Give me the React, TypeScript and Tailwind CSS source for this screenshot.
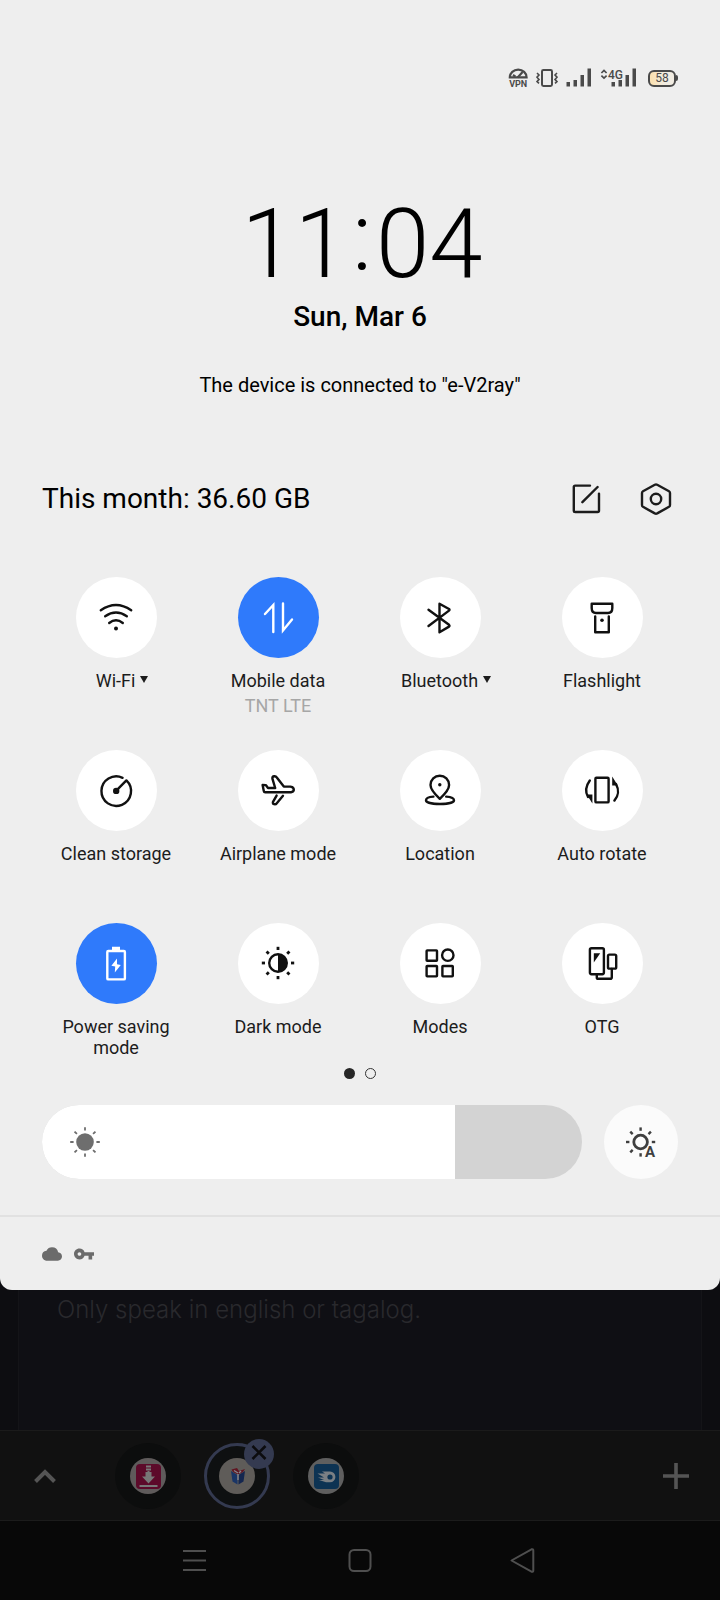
import { useState } from 'react';
import type { ReactNode } from 'react';

type IconProps = { children: ReactNode; className?: string };

const Icon = ({ children, className = 'size-10' }: IconProps) => (
  <svg
    viewBox="0 0 40 40"
    className={className}
    fill="none"
    stroke="currentColor"
    strokeWidth="2.4"
    strokeLinecap="round"
    strokeLinejoin="round"
    aria-hidden="true"
  >
    {children}
  </svg>
);

const rays = [0, 45, 90, 135, 180, 225, 270, 315];

const tiles = [
  {
    label: 'Wi-Fi',
    menu: true,
    icon: (
      <Icon>
        <path d="M4.8 12.3Q20 1.7 35.2 12.3M9.2 18.2Q20 10.8 30.8 18.2M13.2 25Q20 19.5 26.8 25" />
        <circle cx="20" cy="30.6" r="2" fill="currentColor" stroke="none" />
      </Icon>
    ),
  },
  {
    label: 'Mobile data',
    note: 'TNT LTE',
    on: true,
    icon: (
      <Icon>
        <path d="M7 16L15.3 7V34M25 5.5V32.5L34 21.5" strokeLinejoin="miter" />
      </Icon>
    ),
  },
  {
    label: 'Bluetooth',
    menu: true,
    icon: (
      <Icon>
        <path d="M8.5 11.8L29 26.8Q30 27.8 29 28.6L19.5 34.3V5.7L29 11Q30 11.8 29 12.6L8.5 28" />
      </Icon>
    ),
  },
  {
    label: 'Flashlight',
    icon: (
      <Icon>
        <path d="M9.7 5.8H30.3V10C30.3 13.4 28.5 15 26 15H14C11.5 15 9.7 13.4 9.7 10ZM13.2 18.4V34.2H26.8V18.4" />
        <circle cx="20" cy="22.3" r="1.8" fill="currentColor" stroke="none" />
      </Icon>
    ),
  },
  {
    label: 'Clean storage',
    icon: (
      <Icon>
        <path d="M20.3 19.7L30.4 9.4A14.8 14.8 0 1 1 26.6 6.8" />
        <circle cx="20.2" cy="19.9" r="3.2" fill="currentColor" stroke="none" />
      </Icon>
    ),
  },
  {
    label: 'Airplane mode',
    icon: (
      <Icon>
        <path d="M4.6 13.9L7.8 14.1L10 17H17.2L14.4 7.6Q14.2 5.4 16.2 5.2Q17.9 5 18.8 6.4L25.8 15.6H32.5Q36 16.2 35.8 19Q35.4 21 33 21.2H7.2Q6 21.2 5.8 20ZM18.6 24.6L15 30.8Q14.4 32.8 16.2 33.2Q17.8 33.6 18.8 32.2L25 24.8" />
      </Icon>
    ),
  },
  {
    label: 'Location',
    icon: (
      <Icon>
        <path d="M19.8 27.8C14 22.4 10.5 18.6 10.5 14A9.3 9.3 0 0 1 29.1 14C29.1 18.6 25.6 22.4 19.8 27.8Z" />
        <path d="M13.4 25.6C8.6 26 6 27.2 6 29.2C6 31.6 12 33 20 33S34 31.6 34 29.2C34 27.2 31 26 26.2 25.6" />
        <circle cx="19.8" cy="13.8" r="1.7" fill="currentColor" stroke="none" />
      </Icon>
    ),
  },
  {
    label: 'Auto rotate',
    icon: (
      <Icon>
        <rect x="13.4" y="6.8" width="13.2" height="24.6" rx="1" />
        <path d="M7.8 9.5C3.4 15.5 3.2 21 6 26M32.4 29.6C36.6 25 37 18.5 34 13" />
        <path d="M4.8 23.6H10.4V32.4ZM30.2 5.6V14.6H35.8Z" fill="currentColor" stroke="none" />
      </Icon>
    ),
  },
  {
    label: 'Power saving mode',
    on: true,
    icon: (
      <Icon>
        <rect x="11.3" y="7" width="17.6" height="28.4" rx="1" />
        <path d="M16 2.8H24V6H16ZM21 14.6L15.4 21.8L19.2 22.6L18.8 28.4L24.8 21L21 20.2Z" fill="currentColor" stroke="none" />
      </Icon>
    ),
  },
  {
    label: 'Dark mode',
    icon: (
      <Icon>
        <circle cx="20" cy="19" r="8.8" />
        <path d="M20 10.2A8.8 8.8 0 0 1 20 27.8Z" fill="currentColor" stroke="none" />
        {rays.map((angle) => (
          <path key={angle} d="M20 6V2.8" strokeLinecap="butt" strokeWidth="2.8" transform={`rotate(${angle} 20 19)`} />
        ))}
      </Icon>
    ),
  },
  {
    label: 'Modes',
    icon: (
      <Icon>
        <rect x="6.6" y="6.4" width="10.4" height="10.4" rx="0.6" />
        <circle cx="27.8" cy="11.2" r="5.7" />
        <rect x="6.6" y="22" width="10.4" height="10.4" rx="0.6" />
        <rect x="22.4" y="22" width="10.4" height="10.4" rx="0.6" />
      </Icon>
    ),
  },
  {
    label: 'OTG',
    icon: (
      <Icon>
        <rect x="7.9" y="4.2" width="14" height="26" rx="1.6" />
        <rect x="26" y="10.6" width="8.2" height="14" rx="1.4" />
        <path d="M14.8 30.4V33.4Q14.8 34.8 16.2 34.8H28.2Q29.8 34.8 29.8 33.2V25" />
        <path d="M11.8 9.2H18.2L11.8 18.6Z" fill="currentColor" stroke="none" />
      </Icon>
    ),
  },
];

const StatusBar = () => (
  <div className="flex h-5 items-center justify-end gap-2 px-[42px] text-[#4a4a4a]">
    <svg viewBox="0 0 20 20" className="size-5 overflow-visible" fill="none" stroke="currentColor" strokeWidth="2.2" aria-label="VPN" role="img">
      <path d="M1.8 9.4A8.4 7.8 0 0 1 18.6 9.4Z" />
      <path d="M9.6 9.4L14.6 4M5 7L7.5 8.6" />
      <text x="10.2" y="19" textAnchor="middle" fontSize="9" fontWeight="700" fontFamily="Roboto, sans-serif" fill="currentColor" stroke="none">
        VPN
      </text>
    </svg>
    <svg viewBox="0 0 22 20" className="h-5 w-[22px]" fill="none" stroke="currentColor" strokeWidth="2" aria-hidden="true">
      <rect x="6" y="2" width="10" height="16" rx="1.4" />
      <path d="M1 5L3 7L1 9.2L3 11.4L1 13.6L3 15.4M21 5L19 7L21 9.2L19 11.4L21 13.6L19 15.4" strokeWidth="1.6" />
    </svg>
    <svg viewBox="0 0 26 20" className="h-5 w-[26px]" fill="currentColor" aria-hidden="true">
      <path d="M0.5 14H4V18.6H0.5ZM7.5 12H11V18.6H7.5ZM14.5 7H18V18.6H14.5ZM21.5 0.6H25V18.6H21.5Z" />
    </svg>
    <svg viewBox="0 0 36 20" className="h-5 w-9" fill="currentColor" role="img" aria-label="4G">
      <path d="M11.5 14H15V18.6H11.5ZM18.5 12H22V18.6H18.5ZM25.5 7H29V18.6H25.5ZM32.5 0.6H36V18.6H32.5Z" />
      <path d="M1.4 5L4 2.4L6.6 5M1.4 7.6L4 10L6.6 7.6" fill="none" stroke="currentColor" strokeWidth="1.7" />
      <text x="8" y="10.6" fontSize="12" fontWeight="500" fontFamily="Roboto, sans-serif">
        4G
      </text>
    </svg>
    <div className="ml-1 flex items-center">
      <div className="flex h-[17px] w-7 items-center justify-center rounded-md border-2 border-current bg-linear-to-r from-[#fbe2b4] from-10% to-[#f1ece2] to-60% text-xs leading-none">
        58
      </div>
      <div className="h-1.5 w-0.5 rounded-r-sm bg-current" />
    </div>
  </div>
);

const Tile = ({ tile }: { tile: (typeof tiles)[number] }) => {
  const [on, setOn] = useState(Boolean(tile.on));
  return (
    <button
      type="button"
      aria-pressed={on}
      onClick={() => setOn(!on)}
      className="flex min-h-[141px] flex-col items-center text-lg leading-[21px] text-[#1c1c1c]"
    >
      <span
        className={`mb-3 flex size-[81px] items-center justify-center rounded-full ${
          on ? 'bg-[#2f7afb] text-white' : 'bg-white text-[#111111]'
        }`}
      >
        {tile.icon}
      </span>
      <span className={`flex max-w-[124px] items-center gap-[5px] ${tile.menu ? 'pl-3' : ''}`}>
        {tile.label}
        {tile.menu && (
          <svg viewBox="0 0 8 9" className="h-[9px] w-2" fill="currentColor" aria-hidden="true">
            <path d="M0 0H8L4 7Z" />
          </svg>
        )}
      </span>
      {tile.note && <span className="mt-1 text-[#a6a6a6]">{tile.note}</span>}
    </button>
  );
};

const Brightness = () => {
  const [level, setLevel] = useState(195);
  return (
    <div className="mt-[26px] flex items-center gap-[22px] px-[42px]">
      <label className="relative block h-[74px] flex-1 overflow-hidden rounded-full bg-[#d3d3d3]">
        <span className="block h-full bg-white" style={{ width: `${(level / 255) * 100}%` }} />
        <span className="absolute inset-y-0 left-[23px] flex items-center text-[#6e6e6e]">
          <Icon>
            <circle cx="20" cy="20" r="8.8" fill="currentColor" stroke="none" />
            {rays.map((angle) => (
              <path key={angle} d="M20 8.6V5.2" strokeLinecap="butt" strokeWidth="1.8" transform={`rotate(${angle} 20 20)`} />
            ))}
          </Icon>
        </span>
        <input
          type="range"
          aria-label="Brightness"
          min="0"
          max="255"
          value={level}
          onChange={(e) => setLevel(Number(e.target.value))}
          className="absolute inset-0 size-full cursor-pointer opacity-0"
        />
      </label>
      <button
        type="button"
        aria-label="Auto brightness"
        className="flex size-[74px] items-center justify-center rounded-full bg-[#fbfbfb] text-[#3f3f3f]"
      >
        <Icon>
          <circle cx="19.6" cy="20" r="6.8" strokeWidth="2.8" />
          {rays
            .filter((angle) => angle !== 135)
            .map((angle) => (
              <path key={angle} d="M19.6 8.8V5.4" strokeLinecap="butt" transform={`rotate(${angle} 19.6 20)`} />
            ))}
          <text x="24" y="34.6" fontSize="15" fontWeight="700" fontFamily="Roboto, sans-serif" fill="currentColor" stroke="#fbfbfb" strokeWidth="2" paintOrder="stroke">
            A
          </text>
        </Icon>
      </button>
    </div>
  );
};

const Panel = () => (
  <section className="relative rounded-b-xl bg-[#eeeeee] pt-[68px] text-black">
    <StatusBar />
    <header className="flex flex-col items-center">
      <time className="mt-[101px] flex items-center gap-1 pl-1 text-8xl leading-none font-light">
        <span>11</span>
        <span className="pb-3.5 leading-none">:</span>
        <span>04</span>
      </time>
      <p className="mt-0.5 text-[28px] leading-8 font-medium">Sun, Mar 6</p>
      <p className="mt-10 text-xl leading-6">The device is connected to "e-V2ray"</p>
    </header>
    <div className="mt-[82px] flex h-10 items-center px-[42px]">
      <h1 className="flex-1 text-[28px] leading-8">This month: 36.60 GB</h1>
      <div className="mr-0.5 flex gap-[30px] text-[#1c1c1c]">
        <button type="button" aria-label="Edit tiles">
          <Icon>
            <path d="M24 6.6H9.2Q7.8 6.6 7.8 8V32Q7.8 33 9.2 33H31.6Q33 33 33 31.8V14.6M16.4 23.2L31.6 8" />
          </Icon>
        </button>
        <button type="button" aria-label="Settings">
          <Icon>
            <path d="M18.8 5.8Q20 5.2 21.2 5.8L33 12.2Q34 12.8 34 14V26Q34 27.2 33 27.8L21.2 34.4Q20 35 18.8 34.4L7 27.8Q6 27.2 6 26V14Q6 12.8 7 12.2Z" />
            <circle cx="20" cy="20" r="5.2" />
          </Icon>
        </button>
      </div>
    </div>
    <div className="mt-[58px] grid grid-cols-4 gap-y-8 pr-[37px] pl-[35px]">
      {tiles.map((tile) => (
        <Tile key={tile.label} tile={tile} />
      ))}
    </div>
    <div className="mt-1 flex justify-center gap-2.5">
      <span className="size-[11px] rounded-full bg-[#262626]" />
      <span className="size-[11px] rounded-full border border-[#333333]" />
    </div>
    <Brightness />
    <div className="mt-9 flex h-[75px] items-center gap-3 border-t-2 border-[#e1e1e1] px-[42px] text-[#6b6b6b]">
      <svg viewBox="0 4 24 16" className="h-3.5 w-5" fill="currentColor" aria-hidden="true">
        <path d="M19.35 10.04A7.49 7.49 0 0 0 12 4 7.48 7.48 0 0 0 5.35 8.04 5.99 5.99 0 0 0 0 14c0 3.31 2.69 6 6 6h13c2.76 0 5-2.24 5-5 0-2.64-2.05-4.78-4.65-4.96z" />
      </svg>
      <svg viewBox="1 6 22 12" className="h-3 w-5" fill="currentColor" aria-hidden="true">
        <path d="M12.65 10A5.99 5.99 0 0 0 7 6c-3.31 0-6 2.69-6 6s2.69 6 6 6a5.99 5.99 0 0 0 5.65-4H17v4h4v-4h2v-4H12.65zM7 14c-1.1 0-2-.9-2-2s.9-2 2-2 2 .9 2 2-.9 2-2 2z" />
      </svg>
    </div>
  </section>
);

const TabBar = () => (
  <nav className="flex h-[91px] items-center border-y border-[#1b1b1b] bg-[#111111] px-[30px]">
    <button type="button" aria-label="Show tabs" className="mr-[55px] text-[#555555]">
      <svg viewBox="0 0 30 30" className="size-[30px]" fill="none" stroke="currentColor" strokeWidth="4" aria-hidden="true">
        <path d="M5.5 20.5L15 11L24.5 20.5" />
      </svg>
    </button>
    <div className="flex flex-1 gap-[23px]">
      <a href="#downloads" aria-label="Downloads" className="flex size-[66px] items-center justify-center rounded-full bg-[#0c0d0d]">
        <svg viewBox="0 0 36 36" className="size-9" aria-hidden="true">
          <circle cx="18" cy="18" r="18" fill="#5f5b5b" />
          <rect x="6" y="6" width="25" height="25" rx="4" fill="#5c0a2a" />
          <path d="M16 8.5H21M16 11.5H21M18.5 13V23M9.5 28H27.5" stroke="#777" strokeWidth="2" />
          <path d="M15.5 14H21.5V18.5H25L18.5 25.5L12 18.5H15.5Z" fill="#777" />
        </svg>
      </a>
      <div className="relative">
        <a
          href="#chat"
          aria-label="Current tab"
          className="flex size-[66px] items-center justify-center rounded-full border-[3px] border-[#343a50] bg-[#0e1011]"
        >
          <svg viewBox="0 0 36 36" className="size-9" aria-hidden="true">
            <circle cx="18" cy="18" r="18" fill="#5f5c59" />
            <path d="M12 13L18.5 17V26.5L13.5 23.5Z" fill="#1a3566" />
            <path d="M26 13L19.5 17V26.5L24.5 23.5Z" fill="#14264f" />
            <path d="M12.5 11.5L18 10L20 13L26 11L24 14L19 16.5L14 14Z" fill="#611522" />
            <path d="M15 12.5L19 15M19 16V22M22 13L20 15" stroke="#85868c" strokeWidth="1.4" />
          </svg>
        </a>
        <button
          type="button"
          aria-label="Close tab"
          className="absolute -top-1 -right-1 flex size-[30px] items-center justify-center rounded-full bg-[#343a50] text-[#0c0c0e]"
        >
          <svg viewBox="0 0 30 30" className="size-[30px]" stroke="currentColor" strokeWidth="2.6" aria-hidden="true">
            <path d="M8.5 7L21.5 20M21.5 7L8.5 20" />
          </svg>
        </button>
      </div>
      <a href="#files" aria-label="Files" className="flex size-[66px] items-center justify-center rounded-full bg-[#0c0d0d]">
        <svg viewBox="0 0 36 36" className="size-9" aria-hidden="true">
          <circle cx="18" cy="18" r="18" fill="#5f5f5f" />
          <rect x="6" y="6" width="25" height="25" rx="4" fill="#0d3353" />
          <path d="M9.5 15.5H17L14 13.5H22A5.4 5.4 0 0 1 22 24.3H18L11 22H16L10 19.5H16Z" fill="#7a7f84" />
          <circle cx="22" cy="19" r="2.6" fill="#0d3353" />
        </svg>
      </a>
    </div>
    <button type="button" aria-label="New tab" className="text-[#555555]">
      <svg viewBox="0 0 28 28" className="size-7" stroke="currentColor" strokeWidth="3.6" aria-hidden="true">
        <path d="M14 1V27M1 14H27" />
      </svg>
    </button>
  </nav>
);

const SystemNav = () => (
  <nav className="flex h-[79px] items-center justify-center gap-[134px] bg-[#080808] text-[#4f4f4f]">
    <button type="button" aria-label="Recent apps">
      <svg viewBox="0 0 30 30" className="size-[30px]" stroke="currentColor" strokeWidth="2" aria-hidden="true">
        <path d="M2 5H25M2 14.5H25M2 24H25" />
      </svg>
    </button>
    <button type="button" aria-label="Home">
      <svg viewBox="0 0 30 30" className="size-[30px]" fill="none" stroke="currentColor" strokeWidth="2" aria-hidden="true">
        <rect x="4.5" y="4" width="21" height="21" rx="4.5" />
      </svg>
    </button>
    <button type="button" aria-label="Back">
      <svg viewBox="0 0 30 30" className="size-[30px]" fill="none" stroke="currentColor" strokeWidth="2" strokeLinejoin="round" aria-hidden="true">
        <path d="M2.5 14.5L22.5 3.3Q24.3 2.7 24.3 4.5V24.5Q24.3 26.3 22.5 25.7Z" />
      </svg>
    </button>
  </nav>
);

export default function App() {
  return (
    <div className="flex min-h-screen flex-col bg-[#0d0d11] font-[Roboto,sans-serif]">
      <Panel />
      <main className="mx-[18px] flex-1 border-x border-[#141418] bg-[#0f0f14] px-[38px] pt-1">
        <p className="font-[Inter,sans-serif] text-2xl leading-8 font-light text-[#29292d]">Only speak in english or tagalog.</p>
      </main>
      <TabBar />
      <SystemNav />
    </div>
  );
}
